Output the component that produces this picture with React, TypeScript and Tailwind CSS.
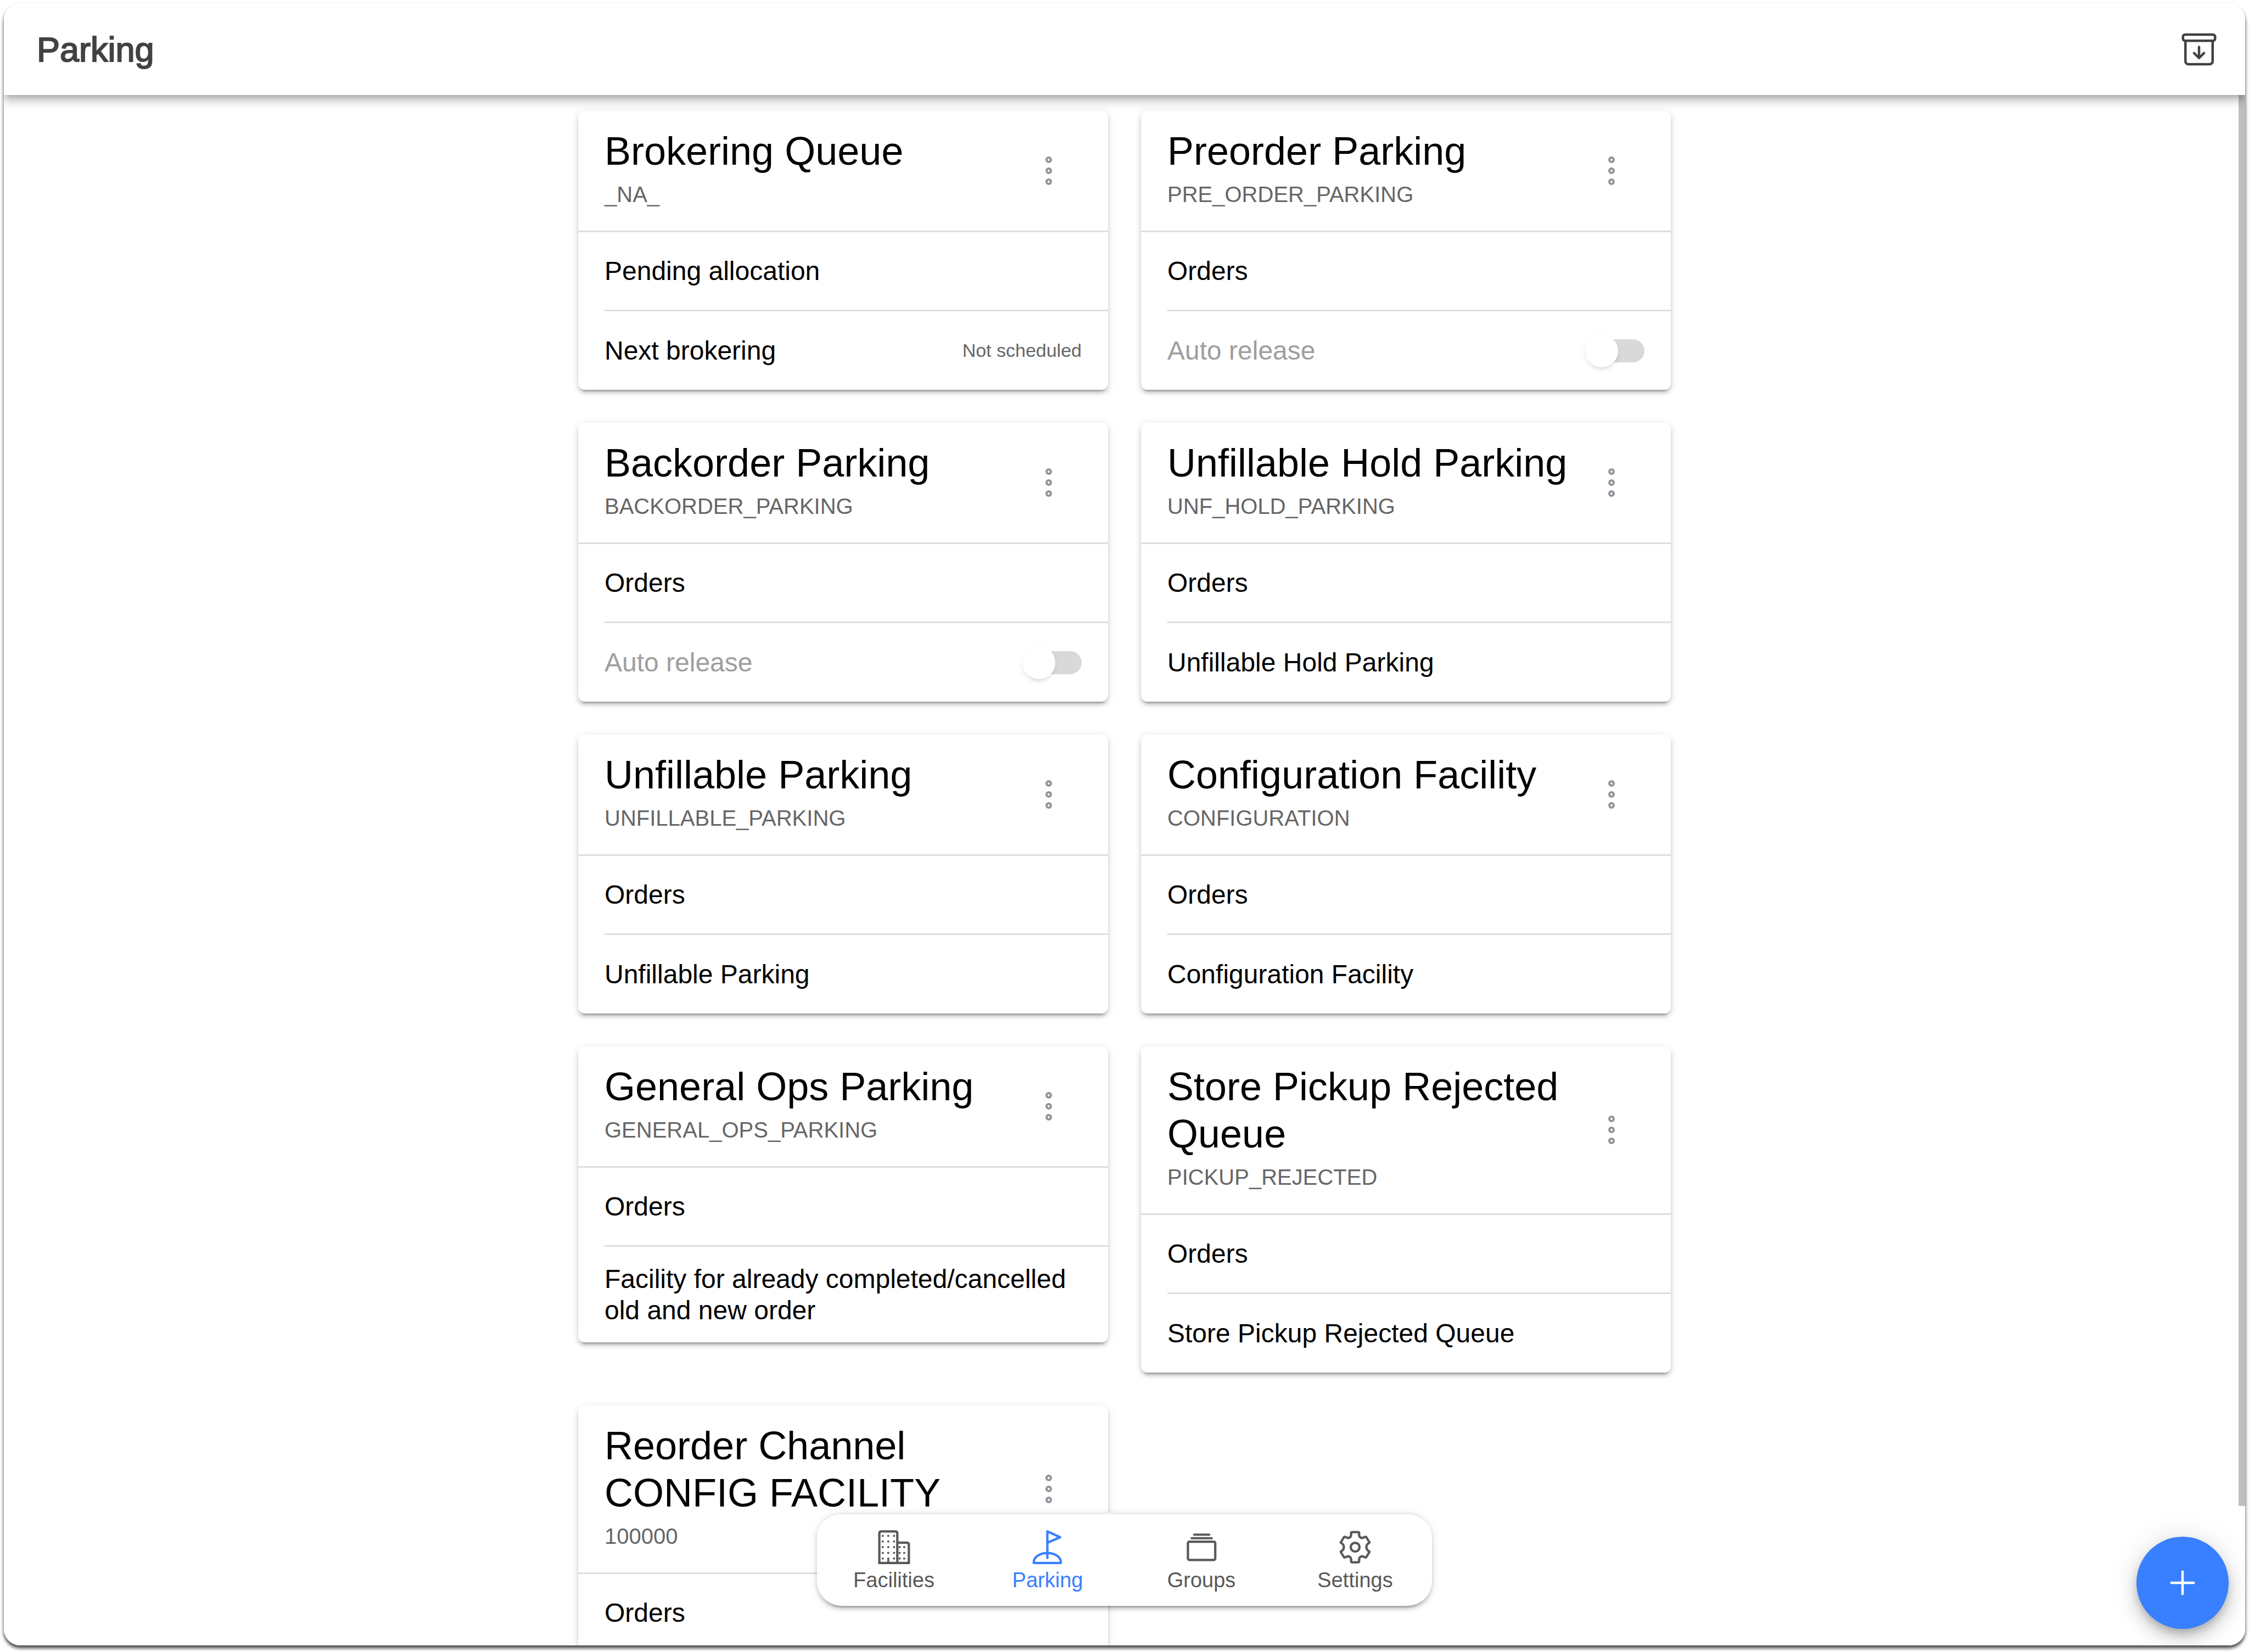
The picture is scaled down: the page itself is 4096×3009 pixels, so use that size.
import type { ReactNode } from "react";
import {
  IoAddOutline,
  IoArchiveOutline,
  IoEllipsisVerticalOutline,
} from "react-icons/io5";

type Row =
  | { kind: "text"; label: string; note?: string }
  | { kind: "toggle"; label: string };

type Facility = { name: string; id: string; rows: Row[] };

const facilities: Facility[] = [
  {
    name: "Brokering Queue",
    id: "_NA_",
    rows: [
      { kind: "text", label: "Pending allocation" },
      { kind: "text", label: "Next brokering", note: "Not scheduled" },
    ],
  },
  {
    name: "Preorder Parking",
    id: "PRE_ORDER_PARKING",
    rows: [
      { kind: "text", label: "Orders" },
      { kind: "toggle", label: "Auto release" },
    ],
  },
  {
    name: "Backorder Parking",
    id: "BACKORDER_PARKING",
    rows: [
      { kind: "text", label: "Orders" },
      { kind: "toggle", label: "Auto release" },
    ],
  },
  {
    name: "Unfillable Hold Parking",
    id: "UNF_HOLD_PARKING",
    rows: [
      { kind: "text", label: "Orders" },
      { kind: "text", label: "Unfillable Hold Parking" },
    ],
  },
  {
    name: "Unfillable Parking",
    id: "UNFILLABLE_PARKING",
    rows: [
      { kind: "text", label: "Orders" },
      { kind: "text", label: "Unfillable Parking" },
    ],
  },
  {
    name: "Configuration Facility",
    id: "CONFIGURATION",
    rows: [
      { kind: "text", label: "Orders" },
      { kind: "text", label: "Configuration Facility" },
    ],
  },
  {
    name: "General Ops Parking",
    id: "GENERAL_OPS_PARKING",
    rows: [
      { kind: "text", label: "Orders" },
      {
        kind: "text",
        label: "Facility for already completed/cancelled old and new order",
      },
    ],
  },
  {
    name: "Store Pickup Rejected Queue",
    id: "PICKUP_REJECTED",
    rows: [
      { kind: "text", label: "Orders" },
      { kind: "text", label: "Store Pickup Rejected Queue" },
    ],
  },
  {
    name: "Reorder Channel CONFIG FACILITY",
    id: "100000",
    rows: [{ kind: "text", label: "Orders" }],
  },
];

function TabIcon({ children }: { children: ReactNode }) {
  return (
    <svg
      viewBox="0 0 288 288"
      fill="none"
      stroke="currentColor"
      strokeWidth="17"
      aria-hidden="true"
      className="size-[72px]"
    >
      {children}
    </svg>
  );
}

const towerDots = [62, 103, 144, 186, 227].flatMap((y) =>
  [63, 103, 145].map((x) => [x, y]),
);
const annexDots = [144, 186, 227].flatMap((y) => [186, 219].map((x) => [x, y]));

function BuildingIcon() {
  return (
    <TabIcon>
      <path d="M38 259V44Q38 29 53 29H154Q169 29 169 44V259" />
      <path d="M169 111H238Q253 111 253 126V259" />
      <path d="M30 259H261" />
      <path d="M103 227V259" strokeWidth="14" />
      <g fill="currentColor" stroke="none">
        {[...towerDots, ...annexDots].map(([x, y]) => (
          <circle key={`${x}-${y}`} cx={x} cy={y} r="8" />
        ))}
      </g>
    </TabIcon>
  );
}

function FlagIcon() {
  return (
    <TabIcon>
      <path d="M142 223V29L235 72L142 112" strokeLinecap="round" strokeLinejoin="round" />
      <path d="M43 259V250C48 210 95 186 142 186S236 210 240 250V259Z" strokeLinejoin="round" />
    </TabIcon>
  );
}

function StackIcon() {
  return (
    <TabIcon>
      <rect x="46" y="104" width="199" height="133" rx="10" />
      <path d="M91 53H202M73 79H220" strokeLinecap="round" strokeWidth="16" />
    </TabIcon>
  );
}

function GearIcon() {
  return (
    <TabIcon>
      <path
        strokeLinejoin="round"
        d="M120 34H168Q172 34 173 38V56Q174 72 194 78Q204 74 219 69Q223 68 225 71L248 108Q250 111 246 113Q226 124 226 144Q226 164 246 175Q250 177 248 180L225 217Q223 220 219 219Q204 214 194 210Q174 216 173 232V250Q172 254 168 254H120Q116 254 115 250V232Q114 216 94 210Q84 214 69 219Q65 220 63 217L40 180Q38 177 42 175Q62 164 62 144Q62 124 42 113Q38 111 40 108L63 71Q65 68 69 69Q84 74 94 78Q114 72 115 56V38Q116 34 120 34Z"
      />
      <circle cx="144" cy="144" r="32" />
    </TabIcon>
  );
}

const tabs: { label: string; icon: () => ReactNode; active?: boolean }[] = [
  { label: "Facilities", icon: BuildingIcon },
  { label: "Parking", icon: FlagIcon, active: true },
  { label: "Groups", icon: StackIcon },
  { label: "Settings", icon: GearIcon },
];

function RowShell({ last, children }: { last: boolean; children: ReactNode }) {
  return (
    <li
      className={
        last
          ? "ml-12 flex min-h-[143px] items-center justify-between py-[30px] pr-12"
          : "ml-12 flex min-h-[144px] items-center justify-between border-b-[3px] border-[#dedede] pr-12"
      }
    >
      {children}
    </li>
  );
}

function FacilityCard({ facility }: { facility: Facility }) {
  return (
    <section className="rounded-xl bg-white shadow-[0_9px_3px_-6px_rgba(0,0,0,0.2),0_6px_6px_0_rgba(0,0,0,0.14),0_3px_15px_0_rgba(0,0,0,0.12)]">
      <header className="flex items-center justify-between border-b-[3px] border-[#dedede] pr-[76px] pl-12">
        <div className="flex flex-col gap-3 pt-[30px] pb-[42px]">
          <h2 className="text-[72px] leading-[86px] text-black">{facility.name}</h2>
          <p className="text-[40px] leading-[48px] text-[#666666]">{facility.id}</p>
        </div>
        <button
          type="button"
          aria-label={`Options for ${facility.name}`}
          className="shrink-0 text-[#92949c]"
        >
          <IoEllipsisVerticalOutline className="size-16" />
        </button>
      </header>
      <ul className="text-[48px] leading-[57px] text-black">
        {facility.rows.map((row, i) => {
          const last = i === facility.rows.length - 1 && i > 0;
          const inputId = `auto-release-${facility.id}`;
          return (
            <RowShell key={row.label} last={last}>
              {row.kind === "toggle" ? (
                <>
                  <label htmlFor={inputId} className="text-[#9e9e9e]">
                    {row.label}
                  </label>
                  <input
                    id={inputId}
                    type="checkbox"
                    role="switch"
                    disabled
                    className="relative h-[42px] w-[108px] shrink-0 appearance-none rounded-full bg-[#d9d9d9] before:absolute before:-top-[9px] before:left-0 before:size-[60px] before:rounded-full before:bg-white before:shadow-[0_9px_3px_-6px_rgba(0,0,0,0.06),0_6px_6px_0_rgba(0,0,0,0.05),0_3px_15px_0_rgba(0,0,0,0.04)] before:content-['']"
                  />
                </>
              ) : (
                <>
                  <span>{row.label}</span>
                  {row.note && (
                    <span className="text-[34px] text-[#666666]">{row.note}</span>
                  )}
                </>
              )}
            </RowShell>
          );
        })}
      </ul>
    </section>
  );
}

export default function App() {
  return (
    <div className="flex h-screen flex-col bg-white px-[7px] pt-[6px] pb-3 font-['Liberation_Sans',Arial,sans-serif]">
      <div className="relative flex min-h-0 flex-1 flex-col rounded-[30px] shadow-[0_5px_6px_0_rgba(0,0,0,0.75)]">
        <div className="flex min-h-0 flex-1 flex-col overflow-hidden rounded-[30px] bg-white">
          <header className="relative z-10 flex h-[167px] shrink-0 items-center justify-between bg-white pr-12 pl-[60px] shadow-[0_6px_12px_-3px_rgba(0,0,0,0.2),0_12px_15px_0_rgba(0,0,0,0.14),0_3px_30px_0_rgba(0,0,0,0.12)]">
            <h1 className="text-[63px] leading-[72px] text-[#424242] [-webkit-text-stroke:2px_#424242]">
              Parking
            </h1>
            <button type="button" aria-label="Archived parkings" className="text-[#424242]">
              <IoArchiveOutline className="size-[72px]" />
            </button>
          </header>

          <div className="relative min-h-0 flex-1">
            <main className="h-full overflow-y-auto [scrollbar-width:none]">
              <div className="mx-auto grid max-w-[1990px] grid-cols-2 items-start gap-[60px] pt-[29px]">
                {facilities.map((facility) => (
                  <FacilityCard key={facility.id} facility={facility} />
                ))}
              </div>
            </main>
            <div aria-hidden="true" className="absolute top-0 right-0 h-[91%] w-3 bg-[#bfbfbf]" />
            <button
              type="button"
              aria-label="Add parking"
              className="absolute right-[30px] bottom-[30px] flex size-[168px] items-center justify-center rounded-full bg-[#3880ff] text-white shadow-[0_9px_15px_-3px_rgba(0,0,0,0.2),0_18px_30px_0_rgba(0,0,0,0.14),0_3px_54px_0_rgba(0,0,0,0.12)]"
            >
              <IoAddOutline className="size-[72px]" />
            </button>
          </div>
        </div>

        <nav className="absolute bottom-[72px] left-1/2 grid h-[170px] w-[1120px] -translate-x-1/2 grid-cols-4 rounded-[45px] border-t-[3px] border-[#ededed] bg-white shadow-[0_9px_3px_-6px_rgba(0,0,0,0.2),0_6px_6px_0_rgba(0,0,0,0.14),0_3px_15px_0_rgba(0,0,0,0.12)]">
          {tabs.map(({ label, icon: Icon, active }) => (
            <a
              key={label}
              href={`#${label.toLowerCase()}`}
              aria-current={active ? "page" : undefined}
              className={
                active
                  ? "flex flex-col items-center justify-center text-[#3880ff]"
                  : "flex flex-col items-center justify-center text-[#595959]"
              }
            >
              <Icon />
              <span className="text-[38px] leading-[48px]">{label}</span>
            </a>
          ))}
        </nav>
      </div>
    </div>
  );
}
